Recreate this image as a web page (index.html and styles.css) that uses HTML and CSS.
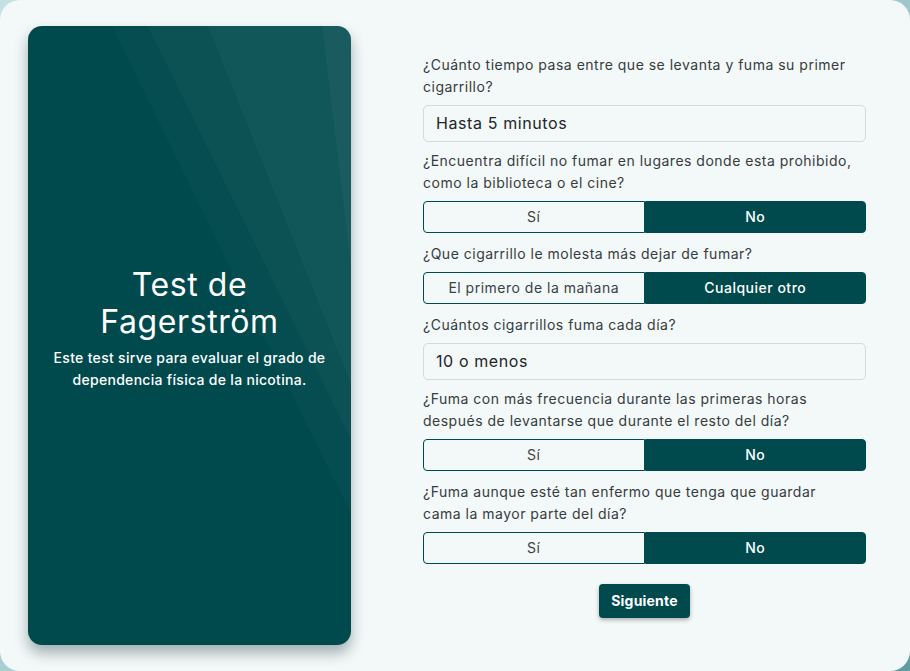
FILE: index.html
```html
<!DOCTYPE html>
<html lang="es">
<head>
<meta charset="utf-8">
<title>Test de Fagerström</title>
<link rel="stylesheet" href="styles.css">
</head>
<body>
<main class="card">
  <section class="hero">
    <svg class="hero-bg" viewBox="0 0 323 619" preserveAspectRatio="none" aria-hidden="true">
      <polygon points="84,0 323,0 323,488" fill="#ffffff" fill-opacity="0.02"/>
      <polygon points="120,0 323,0 323,414" fill="#ffffff" fill-opacity="0.03"/>
      <polygon points="180,0 323,0 323,358" fill="#ffffff" fill-opacity="0.025"/>
      <polygon points="294,0 323,0 323,240" fill="#ffffff" fill-opacity="0.035"/>
    </svg>
    <div class="hero-text">
      <h1 class="hero-title">Test de<br>Fagerström</h1>
      <p class="hero-sub">Este test sirve para evaluar el grado de dependencia física de la nicotina.</p>
    </div>
  </section>

  <form class="quiz">
    <div class="q">
      <label class="q-label">¿Cuánto tiempo pasa entre que se levanta y fuma su primer cigarrillo?</label>
      <div class="select">Hasta 5 minutos</div>
    </div>
    <div class="q">
      <label class="q-label">¿Encuentra difícil no fumar en lugares donde esta prohibido, como la biblioteca o el cine?</label>
      <div class="toggle"><span class="opt">Sí</span><span class="opt on">No</span></div>
    </div>
    <div class="q">
      <label class="q-label">¿Que cigarrillo le molesta más dejar de fumar?</label>
      <div class="toggle"><span class="opt">El primero de la mañana</span><span class="opt on">Cualquier otro</span></div>
    </div>
    <div class="q">
      <label class="q-label">¿Cuántos cigarrillos fuma cada día?</label>
      <div class="select">10 o menos</div>
    </div>
    <div class="q">
      <label class="q-label">¿Fuma con más frecuencia durante las primeras horas después de levantarse que durante el resto del día?</label>
      <div class="toggle"><span class="opt">Sí</span><span class="opt on">No</span></div>
    </div>
    <div class="q">
      <label class="q-label">¿Fuma aunque esté tan enfermo que tenga que guardar<br>cama la mayor parte del día?</label>
      <div class="toggle"><span class="opt">Sí</span><span class="opt on">No</span></div>
    </div>
    <div class="actions"><button type="button" class="next">Siguiente</button></div>
  </form>
</main>
</body>
</html>
```

FILE: styles.css
```css
* { box-sizing: border-box; }
html, body { margin: 0; height: 100%; }
body {
  background: linear-gradient(135deg, #c4e2e5 0%, #9cc6ca 60%, #5f9ba0 100%);
  font-family: Inter, "Open Sans", "Liberation Sans", sans-serif;
  color: #333a3d;
}
.card {
  height: 671px;
  background: #f3f8f8;
  border-radius: 20px;
  display: flex;
  align-items: center;
  padding: 0 44px 0 28px;
}
.hero {
  position: relative;
  width: 323px;
  height: 619px;
  flex: none;
  background: #004a4d;
  border-radius: 14px;
  box-shadow: 0 8px 14px rgba(0, 40, 45, 0.35);
  overflow: hidden;
  display: flex;
  align-items: center;
  justify-content: center;
  color: #fff;
  text-align: center;
}
.hero-bg { position: absolute; inset: 0; width: 100%; height: 100%; }
.hero-text { position: relative; padding: 0 16px; margin-top: -14px; }
.hero-title {
  margin: 0;
  font-weight: 400;
  font-size: 32px;
  letter-spacing: 0.6px;
  line-height: 37px;
}
.hero-sub {
  margin: 7px 0 0;
  font-size: 14px;
  letter-spacing: 0.3px;
  font-weight: 500;
  line-height: 22px;
}
.quiz {
  flex: 1;
  margin-left: 72px;
  display: flex;
  flex-direction: column;
}
.q { margin-bottom: 8px; }
.q-label {
  display: block;
  font-size: 14px;
  letter-spacing: 0.5px;
  line-height: 22px;
  margin-bottom: 7px;
  color: #363c40;
}
.select {
  height: 37px;
  border: 1px solid #d3dada;
  border-radius: 5px;
  padding: 0 12px;
  font-size: 16px;
  letter-spacing: 0.6px;
  line-height: 35px;
  color: #212529;
}
.toggle {
  display: flex;
  height: 32px;
  margin-bottom: 2px;
}
.opt {
  flex: 1;
  display: flex;
  align-items: center;
  justify-content: center;
  font-size: 14px;
  letter-spacing: 0.5px;
  border: 1px solid #004a4d;
  color: #3b4245;
  border-radius: 4px 0 0 4px;
}
.opt.on {
  background: #004a4d;
  color: #fff;
  font-weight: 500;
  border-radius: 0 4px 4px 0;
}
.actions { display: flex; justify-content: center; margin-top: 10px; }
.next {
  font-family: inherit;
  font-size: 14px;
  letter-spacing: 0.2px;
  font-weight: 700;
  color: #fff;
  background: #004a4d;
  border: none;
  border-radius: 4px;
  height: 34px;
  padding: 0 12px;
  box-shadow: 0 2px 4px rgba(0, 0, 0, 0.3);
}
```
